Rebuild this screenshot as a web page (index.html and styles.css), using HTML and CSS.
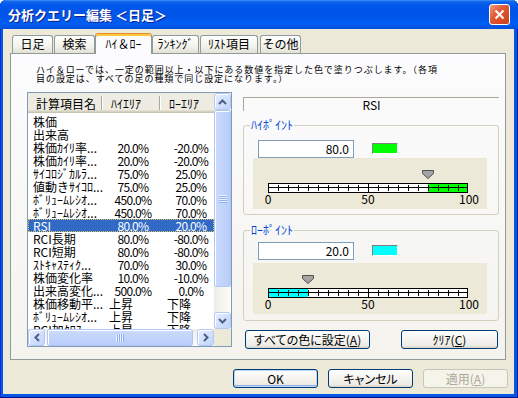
FILE: index.html
```html
<!DOCTYPE html>
<html>
<head>
<meta charset="utf-8">
<title>分析クエリー編集</title>
<link rel="stylesheet" href="styles.css">
</head>
<body>
<div class="window">
  <div class="titlebar">
    <span class="title">分析クエリー編集 ＜日足＞</span>
    <span class="close"><svg width="11" height="11" viewBox="0 0 11 11"><path d="M1.5 1.5L9.5 9.5M9.5 1.5L1.5 9.5" stroke="#fff" stroke-width="2" fill="none"/></svg></span>
  </div>
  <div class="client">
    <div class="tabs">
      <div class="tab t1">日足</div>
      <div class="tab t2">検索</div>
      <div class="tab on t3">ﾊｲ＆ﾛｰ</div>
      <div class="tab t4">ﾗﾝｷﾝｸﾞ</div>
      <div class="tab t5">ﾘｽﾄ項目</div>
      <div class="tab t6">その他</div>
    </div>
    <div class="panel">
      <p class="desc">ハイ＆ローでは、一定の範囲以上・以下にある数値を指定した色で塗りつぶします。（各項<br>目の設定は、すべての足の種類で同じ設定になります。）</p>
      <div class="main">
        <div class="listbox">
          <div class="list-area">
            <div class="lhead">
              <span class="hc hc1">計算項目名</span><span class="sep"></span>
              <span class="hc hc2">ﾊｲｴﾘｱ</span><span class="sep"></span>
              <span class="hc hc3">ﾛｰｴﾘｱ</span>
            </div>
            <div class="rows">
              <div class="row"><span class="nm">株価</span><span></span><span></span></div>
              <div class="row"><span class="nm">出来高</span><span></span><span></span></div>
              <div class="row"><span class="nm">株価ｶｲﾘ率...</span><span class="v">20.0%</span><span class="v">-20.0%</span></div>
              <div class="row"><span class="nm">株価ｶｲﾘ率...</span><span class="v">20.0%</span><span class="v">-20.0%</span></div>
              <div class="row"><span class="nm">ｻｲｺﾛｼﾞｶﾙﾗ...</span><span class="v">75.0%</span><span class="v">25.0%</span></div>
              <div class="row"><span class="nm">値動きｻｲｺﾛ...</span><span class="v">75.0%</span><span class="v">25.0%</span></div>
              <div class="row"><span class="nm">ﾎﾞﾘｭｰﾑﾚｼｵ...</span><span class="v">450.0%</span><span class="v">70.0%</span></div>
              <div class="row"><span class="nm">ﾎﾞﾘｭｰﾑﾚｼｵ...</span><span class="v">450.0%</span><span class="v">70.0%</span></div>
              <div class="row sel"><span class="nm">RSI</span><span class="v">80.0%</span><span class="v">20.0%</span></div>
              <div class="row"><span class="nm">RCI長期</span><span class="v">80.0%</span><span class="v">-80.0%</span></div>
              <div class="row"><span class="nm">RCI短期</span><span class="v">80.0%</span><span class="v">-80.0%</span></div>
              <div class="row"><span class="nm">ｽﾄｷｬｽﾃｨｸ...</span><span class="v">70.0%</span><span class="v">30.0%</span></div>
              <div class="row"><span class="nm">株価変化率</span><span class="v">10.0%</span><span class="v">-10.0%</span></div>
              <div class="row"><span class="nm">出来高変化...</span><span class="v">500.0%</span><span class="v">0.0%</span></div>
              <div class="row"><span class="nm">株価移動平...</span><span class="l">上昇</span><span class="l">下降</span></div>
              <div class="row"><span class="nm">ﾎﾞﾘｭｰﾑﾚｼｵ...</span><span class="l">上昇</span><span class="l">下降</span></div>
              <div class="row"><span class="nm">RCI加ｸﾛｽ</span><span class="l">上昇</span><span class="l">下降</span></div>
            </div>
          </div>
          <div class="vscroll">
            <div class="sbtn"><svg width="9" height="6" viewBox="0 0 9 6"><polyline points="1,5 4.5,1.5 8,5" stroke="#4D6185" stroke-width="2" fill="none"/></svg></div>
            <div class="thumb vthumb"><svg width="8" height="8" viewBox="0 0 8 8"><path d="M0 0.5H8M0 2.5H8M0 4.5H8M0 6.5H8" stroke="#EEF4FE"/><path d="M0 1.5H8M0 3.5H8M0 5.5H8M0 7.5H8" stroke="#8CB0F8"/></svg></div>
            <div class="strack"></div>
            <div class="sbtn"><svg width="9" height="6" viewBox="0 0 9 6"><polyline points="1,1 4.5,4.5 8,1" stroke="#4D6185" stroke-width="2" fill="none"/></svg></div>
          </div>
          <div class="hscroll">
            <div class="sbtn"><svg width="6" height="9" viewBox="0 0 6 9"><polyline points="5,1 1.5,4.5 5,8" stroke="#4D6185" stroke-width="2" fill="none"/></svg></div>
            <div class="thumb hthumb"><svg width="8" height="8" viewBox="0 0 8 8"><path d="M0.5 0V8M2.5 0V8M4.5 0V8M6.5 0V8" stroke="#EEF4FE"/><path d="M1.5 0V8M3.5 0V8M5.5 0V8M7.5 0V8" stroke="#8CB0F8"/></svg></div>
            <div class="strack"></div>
            <div class="sbtn"><svg width="6" height="9" viewBox="0 0 6 9"><polyline points="1,1 4.5,4.5 1,8" stroke="#4D6185" stroke-width="2" fill="none"/></svg></div>
          </div>
          <div class="corner"></div>
        </div>
        <div class="right">
          <div class="rsi">RSI</div>
          <fieldset class="grp grp-hi">
            <legend>ﾊｲﾎﾟｲﾝﾄ</legend>
            <div class="editrow"><div class="edit">80.0</div><div class="swatch sw-green"></div></div>
            <svg class="slider" width="234" height="51" viewBox="0 0 234 51">
              <rect x="15" y="25" width="200" height="10" fill="#fff"/>
              <rect x="175" y="26" width="39" height="8" fill="#00FF00"/>
              <rect x="15.5" y="25.5" width="199" height="9" fill="none" stroke="#000"/>
              <path d="M16 29.5H214M115.5 26V34M25.5 27V33M35.5 27V33M45.5 27V33M55.5 27V33M65.5 27V33M75.5 27V33M85.5 27V33M95.5 27V33M105.5 27V33M125.5 27V33M135.5 27V33M145.5 27V33M155.5 27V33M165.5 27V33M175.5 27V33M185.5 27V33M195.5 27V33M205.5 27V33" stroke="#000" fill="none"/>
              <polygon points="169.5,12.5 180.5,12.5 180.5,15.5 175,20.5 169.5,15.5" fill="#A4A4A4" stroke="#505050"/>
              <text x="15" y="46" text-anchor="middle">0</text>
              <text x="115" y="46" text-anchor="middle">50</text>
              <text x="216" y="46" text-anchor="middle">100</text>
            </svg>
          </fieldset>
          <fieldset class="grp grp-lo">
            <legend>ﾛｰﾎﾟｲﾝﾄ</legend>
            <div class="editrow"><div class="edit">20.0</div><div class="swatch sw-cyan"></div></div>
            <svg class="slider" width="234" height="51" viewBox="0 0 234 51">
              <rect x="15" y="25" width="200" height="10" fill="#fff"/>
              <rect x="16" y="26" width="39" height="8" fill="#00FFFF"/>
              <rect x="15.5" y="25.5" width="199" height="9" fill="none" stroke="#000"/>
              <path d="M16 29.5H214M115.5 26V34M25.5 27V33M35.5 27V33M45.5 27V33M55.5 27V33M65.5 27V33M75.5 27V33M85.5 27V33M95.5 27V33M105.5 27V33M125.5 27V33M135.5 27V33M145.5 27V33M155.5 27V33M165.5 27V33M175.5 27V33M185.5 27V33M195.5 27V33M205.5 27V33" stroke="#000" fill="none"/>
              <polygon points="49.5,12.5 60.5,12.5 60.5,15.5 55,20.5 49.5,15.5" fill="#A4A4A4" stroke="#505050"/>
              <text x="15" y="46" text-anchor="middle">0</text>
              <text x="115" y="46" text-anchor="middle">50</text>
              <text x="216" y="46" text-anchor="middle">100</text>
            </svg>
          </fieldset>
          <div class="btnrow">
            <div class="btn btn-all">すべての色に設定(<u>A</u>)</div>
            <div class="btn btn-clear">ｸﾘｱ(<u>C</u>)</div>
          </div>
        </div>
      </div>
    </div>
    <div class="footer">
      <div class="btn default">OK</div>
      <div class="btn">キャンセル</div>
      <div class="btn disabled">適用(<u>A</u>)</div>
    </div>
  </div>
</div>
</body>
</html>
```

FILE: styles.css
```css
* { box-sizing: border-box; }
html, body { margin: 0; padding: 0; }
body {
  width: 518px;
  height: 398px;
  overflow: hidden;
  background: #ffffff;
  font-family: "Noto Sans CJK JP", "Noto Sans", sans-serif;
  font-size: 12px;
  color: #000;
}
.window {
  width: 518px;
  height: 398px;
  display: flex;
  flex-direction: column;
  background: #0855E3;
  border-radius: 6px 6px 0 0;
  box-shadow: inset 0 -1px 0 #00138C, inset 1px 0 0 #0831D9, inset -1px 0 0 #001EA0;
}
.titlebar {
  height: 29px;
  flex: none;
  display: flex;
  align-items: center;
  padding: 0 8px;
  border-radius: 6px 6px 0 0;
  background: linear-gradient(#3C8FF8 0px, #0B62EA 2px, #0057EC 6px, #0054E6 50%, #005EF4 80%, #0050DA 100%);
}
.title {
  flex: 1;
  color: #fff;
  font-weight: bold;
  font-size: 13px;
  text-shadow: 1px 1px 0 #0F1F8A;
  white-space: nowrap;
}
.close {
  width: 21px;
  height: 21px;
  border: 1px solid #fff;
  border-radius: 3px;
  display: flex;
  align-items: center;
  justify-content: center;
  background: linear-gradient(135deg, #F19A7C 0%, #E35A36 40%, #C83E18 100%);
}
.client {
  flex: 1;
  margin: 0 4px 4px 3px;
  background: #ECE9D8;
  padding: 4px 8px 6px 7px;
  display: flex;
  flex-direction: column;
}
.tabs {
  display: flex;
  align-items: flex-end;
  height: 21px;
  padding-left: 2px;
  position: relative;
  z-index: 1;
}
.tab {
  flex: none;
  height: 18px;
  margin-bottom: 1px;
  border: 1px solid #919B9C;
  border-bottom: none;
  border-radius: 3px 3px 0 0;
  background: linear-gradient(#FFFFFF, #F3F2EC 60%, #E3E1D6);
  text-align: center;
  line-height: 16px;
  white-space: nowrap;
}
.tab.on {
  height: 21px;
  margin-bottom: 0;
  background: #FCFCFE;
  border-top: 1px solid #E68B2C;
  box-shadow: inset 0 2px 0 #FFC83C;
  line-height: 20px;
}
.t1 { width: 41px; margin-right: 1px; }
.t2 { width: 41px; }
.t3 { width: 57px; }
.t4 { width: 47px; margin-right: 1px; }
.t5 { width: 58px; margin-right: 2px; }
.t6 { width: 41px; }
.panel {
  height: 307px;
  margin-top: -1px;
  border: 1px solid #919B9C;
  background: linear-gradient(#FCFCFE, #F4F3EE);
  padding: 11px 7px 0 16px;
  display: flex;
  flex-direction: column;
}
.desc {
  margin: 0 0 9px 9px;
  font-size: 9px;
  line-height: 9px;
  letter-spacing: 0.95px;
  white-space: nowrap;
}
.main {
  display: flex;
  align-items: flex-start;
  gap: 11px;
}
.listbox {
  flex: none;
  width: 205px;
  height: 255px;
  border: 1px solid #7F9DB9;
  background: #fff;
  display: grid;
  grid-template-columns: 1fr 17px;
  grid-template-rows: 1fr 17px;
}
.list-area { overflow: hidden; }
.lhead {
  height: 20px;
  display: flex;
  align-items: center;
  background: #EDEBE2;
  box-shadow: inset 0 -1px 0 #C7C5B2, inset 0 -2px 0 #D6D2C2, inset 0 -3px 0 #E2DED0;
  white-space: nowrap;
}
.hc { flex: none; padding-left: 8px; }
.hc1 { width: 73px; }
.hc2 { width: 56px; }
.hc3 { flex: 1; }
.sep {
  flex: none;
  width: 2px;
  height: 14px;
  border-left: 1px solid #ACA899;
  border-right: 1px solid #fff;
}
.rows { padding-top: 2px; }
.row {
  display: grid;
  grid-template-columns: 81px 58px 48px;
  height: 13px;
  line-height: 13px;
  white-space: nowrap;
}
.nm { padding-left: 5px; }
.v { text-align: center; letter-spacing: -0.7px; }
.row > .v:nth-child(2) { padding-right: 10px; }
.l { text-align: left; }
.row.sel {
  background: #316AC5;
  color: #fff;
  outline: 1px dotted #E0C060;
  outline-offset: -1px;
}
.vscroll {
  display: flex;
  flex-direction: column;
  background: linear-gradient(90deg, #EEEDE5, #FDFDFA);
}
.hscroll {
  display: flex;
  background: linear-gradient(#EEEDE5, #FDFDFA);
}
.sbtn {
  flex: none;
  width: 17px;
  height: 17px;
  border: 1px solid #B4C8F6;
  border-radius: 3px;
  background: linear-gradient(135deg, #E6EEFE, #C1D3FC);
  box-shadow: inset 1px 1px 0 #fff;
  display: flex;
  align-items: center;
  justify-content: center;
}
.thumb {
  flex: none;
  border: 1px solid #B0C6F5;
  border-radius: 2px;
  box-shadow: inset 1px 1px 0 #fff;
  display: flex;
  align-items: center;
  justify-content: center;
}
.vthumb {
  height: 177px;
  background: linear-gradient(90deg, #CCDBFC, #B9CDFA);
}
.hthumb {
  width: 146px;
  margin-left: 2px;
  background: linear-gradient(#CCDBFC, #B9CDFA);
}
.strack { flex: 1; }
.corner { background: #ECE9D8; }
.right {
  flex: none;
  width: 256px;
  margin-top: 5px;
  display: flex;
  flex-direction: column;
}
.rsi {
  height: 14px;
  border-top: 1px solid #ACA899;
  border-left: 1px solid #ACA899;
  text-align: center;
  line-height: 13px;
}
.grp {
  margin: 0;
  min-width: 0;
  border: 1px solid #D0D0BF;
  border-radius: 3px;
  padding: 9px 11px 5px 6px;
}
.grp legend {
  padding: 0 1px;
  margin: 0;
  color: #0046D5;
  font-size: 12px;
  line-height: 12px;
}
.grp-hi { margin-top: 8px; }
.grp-lo { margin-top: 9px; padding-top: 6px; padding-bottom: 6px; }
.editrow {
  display: flex;
  align-items: flex-start;
  margin-left: 8px;
}
.edit {
  width: 96px;
  height: 18px;
  border: 1px solid #7F9DB9;
  background: #fff;
  text-align: right;
  padding-right: 4px;
  line-height: 16px;
}
.swatch {
  width: 26px;
  height: 11px;
  margin: 3px 0 0 18px;
  border-top: 1px solid #808080;
  border-left: 1px solid #808080;
  border-right: 1px solid #fff;
  border-bottom: 1px solid #fff;
}
.sw-green { background: #00FF00; }
.sw-cyan { background: #00FFFF; }
.slider {
  display: block;
  margin-left: 3px;
  background: #ECE9D8;
  font-size: 12px;
}
.grp-lo .slider { margin-top: 3px; }
.btnrow {
  display: flex;
  justify-content: space-between;
  margin-top: 9px;
  padding: 0 1px 0 2px;
}
.btn {
  height: 19px;
  border: 1px solid #003C74;
  border-radius: 3px;
  background: linear-gradient(#FFFFFF 0%, #F5F4F0 45%, #ECEBE6 85%, #D8D2C6 100%);
  text-align: center;
  line-height: 17px;
  white-space: nowrap;
  font-feature-settings: "palt";
}
.btn-all { width: 125px; }
.btn-clear { width: 97px; }
.footer {
  display: flex;
  justify-content: flex-end;
  gap: 10px;
  margin: 9px -2px 0 0;
}
.footer .btn { width: 85px; }
.btn.default {
  box-shadow: inset 0 0 0 1px #C0D6FB, inset 0 -1px 0 1px #8EB1E8;
}
.btn.disabled {
  border-color: #C9C7BA;
  color: #ACA899;
  background: #F5F4EA;
}
```
